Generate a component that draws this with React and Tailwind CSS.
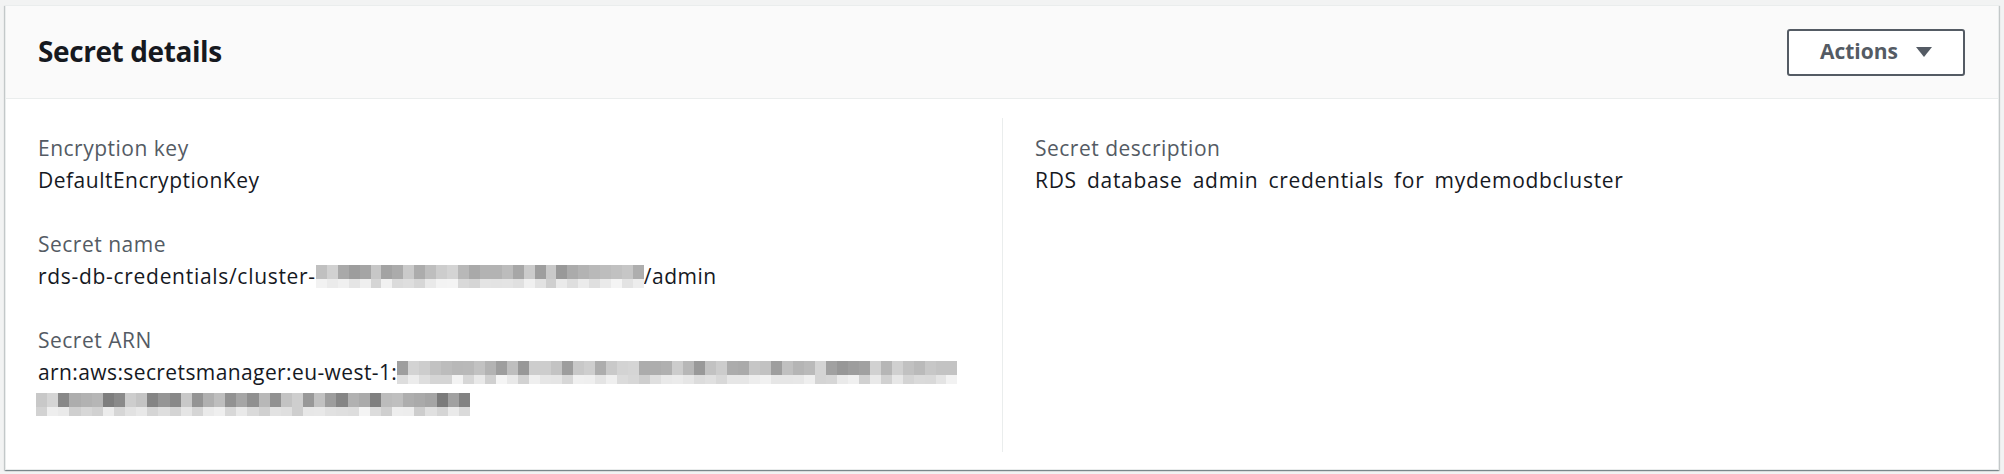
import React from 'react';

const FONT = { fontFamily: '"Open Sans", "Liberation Sans", sans-serif' };

// pseudo-random greys for the pixelated (redacted) parts
const greys = (seed, count) => {
    const out = [];
    let s = seed;
    for (let i = 0; i < count; i++) {
        s = (s * 9301 + 49297) % 233280;
        out.push(s / 233280);
    }
    return out;
};

const Redacted = ({ width, seed, dark = 150, light = 215 }) => {
    const cols = Math.round(width / 11);
    const top = greys(seed, cols);
    const bottom = greys(seed + 7, cols);
    return (
        <span className="inline-flex flex-col align-top h-[23px] translate-y-[5px]" style={{ width }}>
            <span className="flex h-[14px]">
                {top.map((v, i) => {
                    const g = Math.round(dark + v * (light - dark));
                    return <span key={i} className="flex-1" style={{ background: `rgb(${g},${g},${g})` }} />;
                })}
            </span>
            <span className="flex h-[9px]">
                {bottom.map((v, i) => {
                    const g = Math.round(205 + v * 40);
                    return <span key={i} className="flex-1" style={{ background: `rgb(${g},${g},${g})` }} />;
                })}
            </span>
        </span>
    );
};

const Field = ({ label, children }) => (
    <div className="mb-[32px]">
        <div className="text-[#545b64]">{label}</div>
        <div className="text-[#16191f]">{children}</div>
    </div>
);

export default function App() {
    return (
        <div className="min-h-screen bg-[#f2f3f3] pt-[5px] pl-[5px] pr-[5px]" style={FONT}>
            <div className="bg-white border border-[#eaeded] shadow-[0_1px_1px_0_rgba(0,28,36,0.3),1px_1px_1px_0_rgba(0,28,36,0.15),-1px_1px_1px_0_rgba(0,28,36,0.15)]">
                {/* Header */}
                <div className="bg-[#fafafa] border-b border-[#eaeded] h-[93px] px-[32px] flex items-center justify-between">
                    <h2 className="text-[28px] font-bold tracking-[-0.4px] text-[#16191f] pb-[2px]">Secret details</h2>
                    <button className="w-[178px] h-[47px] border-2 border-[#545b64] rounded-[3px] bg-white flex items-center justify-center gap-[18px] text-[21px] font-bold text-[#545b64] mr-[1px]">
                        Actions
                        <svg width="16" height="10" viewBox="0 0 16 10">
                            <path d="M0 0 H16 L8 10 Z" fill="#545b64" />
                        </svg>
                    </button>
                </div>

                {/* Body */}
                <div className="px-[32px] pt-[19px] pb-[17px] grid grid-cols-2 text-[21px] leading-[32px] tracking-[0.5px]">
                    <div className="pt-[14px] pr-[32px]">
                        <Field label="Encryption key">DefaultEncryptionKey</Field>
                        <Field label="Secret name">
                            <span className="tracking-[0.7px]">rds-db-credentials/cluster-</span>
                            <Redacted width={328} seed={11} />/admin
                        </Field>
                        <Field label="Secret ARN">
                            <span className="tracking-[0.4px]">arn:aws:secretsmanager:eu-west-1:</span>
                            <Redacted width={560} seed={23} />
                            <br />
                            <span className="-ml-[2px]"><Redacted width={434} seed={41} dark={120} /></span>
                        </Field>
                    </div>
                    <div className="pt-[14px] pl-[32px] border-l border-[#eaeded]">
                        <Field label="Secret description">
                            <span className="tracking-[0.7px] [word-spacing:4px]">RDS database admin credentials for mydemodbcluster</span>
                        </Field>
                    </div>
                </div>
            </div>
        </div>
    );
}
